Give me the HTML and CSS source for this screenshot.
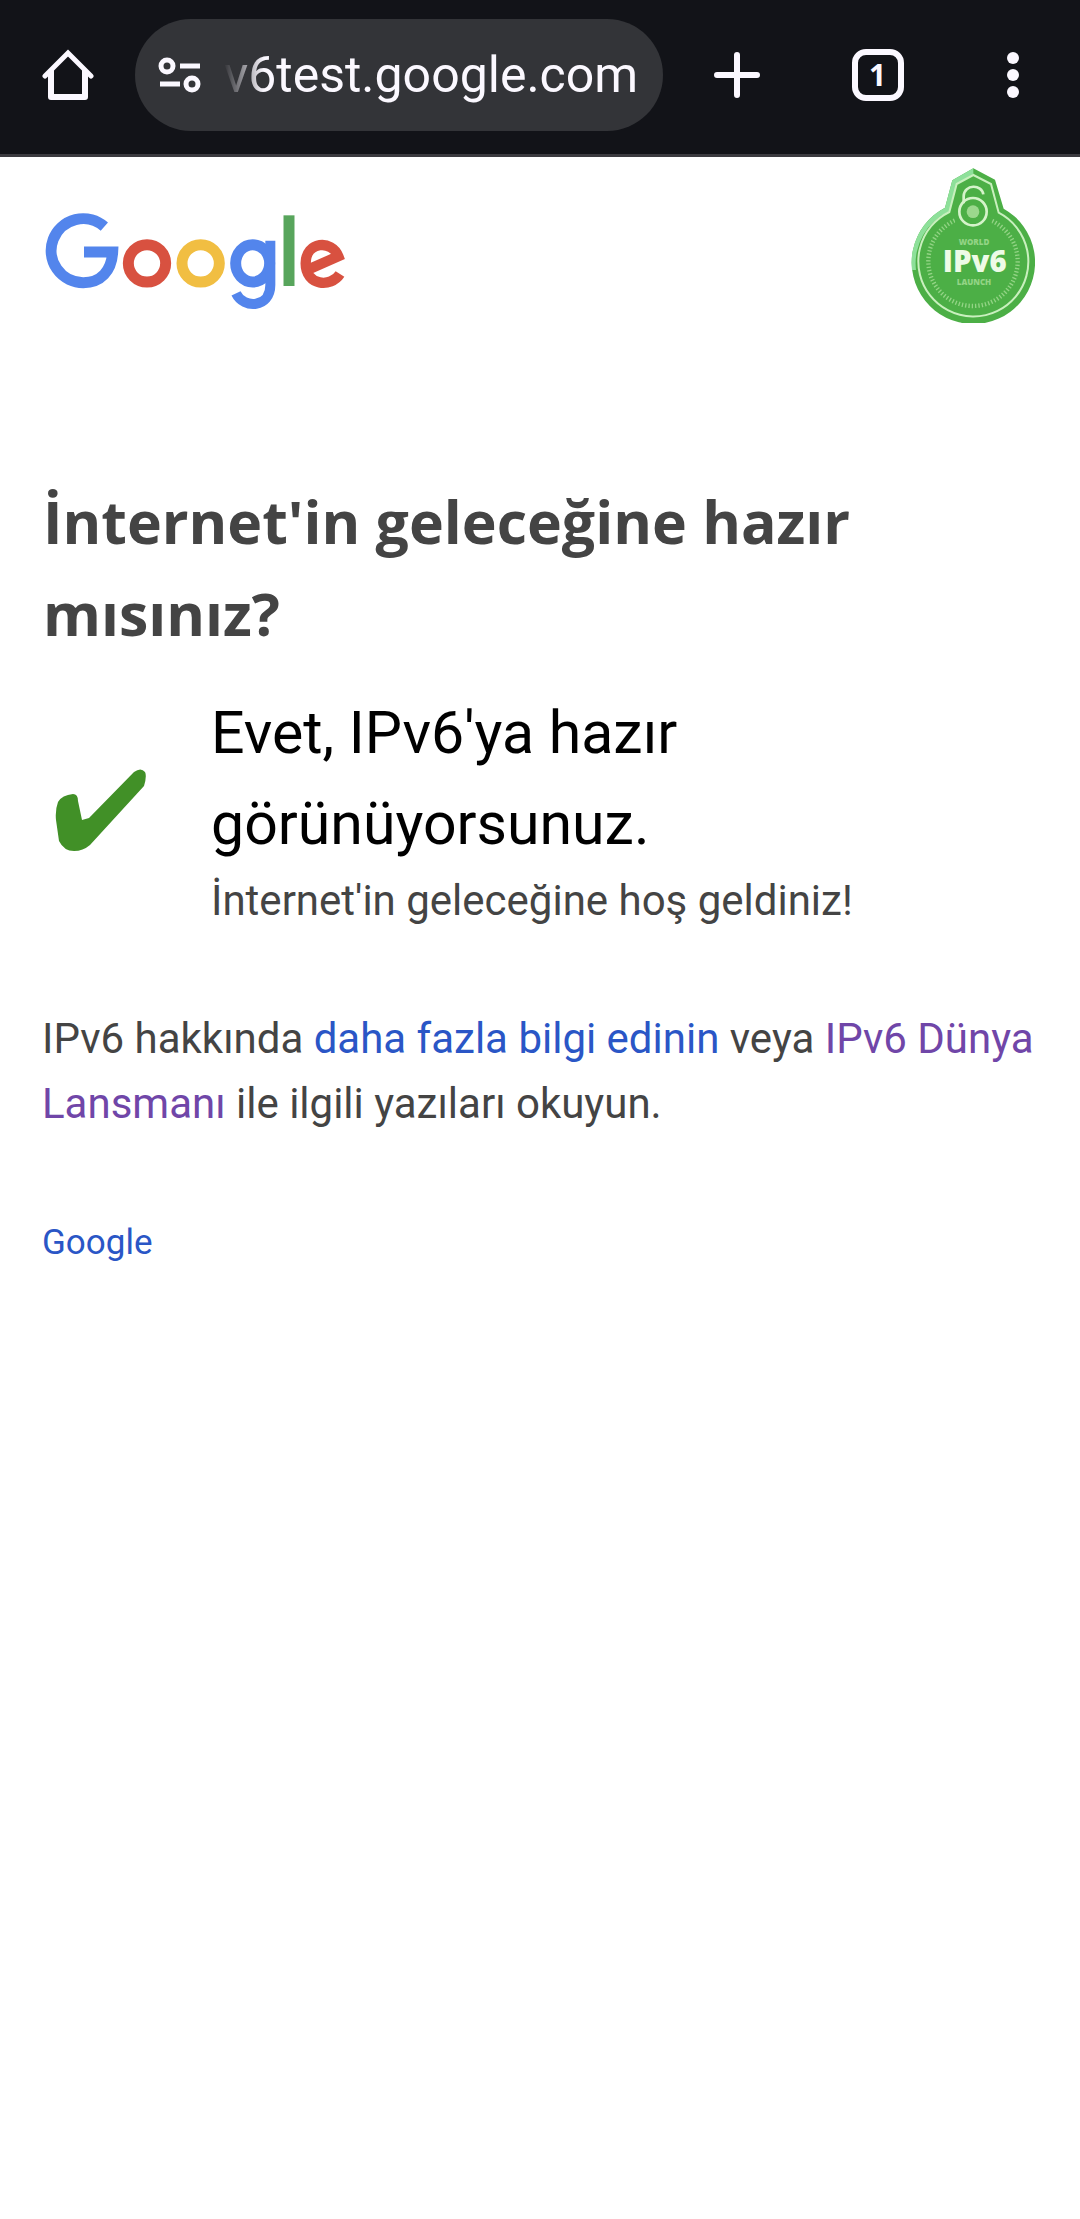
FILE: index.html
```html
<!DOCTYPE html>
<html lang="tr">
<head>
<meta charset="utf-8">
<meta name="viewport" content="width=device-width, initial-scale=1">
<title>IPv6 testi</title>
<link rel="stylesheet" href="styles.css">
</head>
<body>
<header class="toolbar">
  <button class="tool" type="button" aria-label="Ana sayfa">
    <svg width="52" height="52" viewBox="0 0 52 52" fill="none" stroke="currentColor" stroke-width="6" stroke-linejoin="round"><path d="M3 27 26 4 49 27" stroke-linejoin="miter" stroke-linecap="round" stroke-width="5"/><path d="M9 21V48H43V21"/></svg>
  </button>
  <form class="omnibox">
    <svg class="site-icon" width="44" height="38" viewBox="0 0 44 38" fill="none" stroke="currentColor" stroke-width="5"><circle cx="9" cy="10" r="6"/><path d="M22 10H42M2 28H22"/><circle cx="34" cy="28" r="6"/></svg>
    <input class="url" type="text" value="v6test.google.com" aria-label="Adres">
  </form>
  <button class="tool tool-new" type="button" aria-label="Yeni sekme">
    <svg width="46" height="46" viewBox="0 0 46 46" fill="none" stroke="currentColor" stroke-width="6" stroke-linecap="round"><path d="M3 23H43M23 3V43"/></svg>
  </button>
  <button class="tool" type="button" aria-label="Sekmeler"><span class="tabs">1</span></button>
  <button class="tool" type="button" aria-label="Menü">
    <svg width="12" height="46" viewBox="0 0 12 46" fill="currentColor"><circle cx="6" cy="6" r="6"/><circle cx="6" cy="23" r="6"/><circle cx="6" cy="40" r="6"/></svg>
  </button>
</header>
<main class="page">
  <div class="brand">
    <svg class="logo" width="300" height="98" viewBox="45 36 900 294" fill="none" stroke-width="33" role="img" aria-label="Google">
      <path stroke="#5385ec" d="M223 80A96 96 0 1 0 160 248C212 248 245 213 248 156H162"/>
      <circle stroke="#d85140" cx="351" cy="190" r="56"/>
      <circle stroke="#f1be42" cx="512" cy="190" r="56"/>
      <g stroke="#5385ec"><ellipse cx="668" cy="190" rx="51" ry="56"/><path stroke-width="30" d="M721 122V255C721 324 641 328 618 280"/></g>
      <path stroke="#58a55c" d="M777 46V258"/>
      <path stroke="#d85140" stroke-width="31" d="M840 206 925 169C906 118 827 124 827 190C827 258 903 264 930 222"/>
    </svg>
    <svg class="badge" width="124" height="155" viewBox="63 24 372 465" role="img" aria-label="World IPv6 Launch">
      <path fill="#4caf46" d="M250 25 315 59 341 146A185 185 0 1 1 165 143L187 61Z"/>
      <path fill="#8ee09a" d="M250 25 187 61 165 143A185 185 0 0 0 66 330L78 330A171 171 0 0 1 178 154L200 72 250 42Z"/>
      <path fill="none" stroke="#c9f0be" stroke-width="6" d="M250 45 303 72 326 158A165 165 0 1 1 178 156L200 72Z"/>
      <circle cx="249" cy="304" r="134" fill="none" stroke="#93d485" stroke-width="13" stroke-dasharray="4 6"/>
      <path fill="#4caf46" d="M205 120H295L305 190H195Z"/>
      <path fill="none" stroke="#d5f3ca" stroke-width="8" d="M221 130V108C223 72 276 72 280 103"/>
      <circle cx="249" cy="155" r="41" fill="none" stroke="#d5f3ca" stroke-width="8"/>
      <circle cx="249" cy="155" r="19" fill="#9bd88d"/>
      <g text-anchor="middle" class="badge-text"><text x="254" y="336" class="badge-big">IPv6</text><text x="252" y="254" class="badge-small">WORLD</text><text x="252" y="375" class="badge-small">LAUNCH</text></g>
    </svg>
  </div>
  <h1 class="title">İnternet'in geleceğine hazır mısınız?</h1>
  <section class="result">
    <svg class="check" width="92" height="84" viewBox="0 0 92 84"><path fill="#419027" d="M3 34Q7 27 18 26Q23 26 23 33L27 52L34 50L79 4Q86-1 90 4Q92 8 89 18L35 77Q28 83 19 83Q9 83 4 73L1 52Q0 42 3 34Z"/></svg>
    <div>
      <p class="answer">Evet, IPv6'ya hazır görünüyorsunuz.</p>
      <p class="welcome">İnternet'in geleceğine hoş geldiniz!</p>
    </div>
  </section>
  <p class="more">IPv6 hakkında <a href="#bilgi">daha fazla bilgi edinin</a> veya <a class="visited" href="#lansman">IPv6 Dünya Lansmanı</a> ile ilgili yazıları okuyun.</p>
  <footer class="footer"><a href="#google">Google</a></footer>
</main>
</body>
</html>
```
FILE: styles.css
```css
* { box-sizing: border-box; }
body { margin: 0; background: #fff; color: #444; font-family: Roboto, sans-serif; font-size: 42px; }
h1, p { margin: 0; }
a { color: #2a56c6; text-decoration: none; }
svg { display: block; flex: none; }

.toolbar { display: flex; align-items: center; padding: 19px 0 23px; background: #121318; border-bottom: 3px solid #3b3a3f; color: #fbf8ff; }
.tool { display: flex; flex: none; align-items: center; justify-content: center; width: 135px; height: 112px; padding: 0; border: 0; background: none; color: inherit; }
.tool-new { width: 147px; }
.omnibox { display: flex; flex: 1; align-items: center; gap: 22px; min-width: 0; height: 112px; padding: 0 20px 0 23px; border-radius: 56px; background: #333438; }
.url { flex: 1; min-width: 0; height: 70px; padding: 0; border: 0; outline: 0; background: none; color: inherit; font: 50px/70px Roboto, sans-serif; -webkit-mask-image: linear-gradient(to right, transparent, #000 40px); mask-image: linear-gradient(to right, transparent, #000 40px); }
.tabs { width: 52px; height: 52px; border: 6px solid; border-radius: 14px; font: bold 30px/40px "Open Sans", sans-serif; text-align: center; }

.page { padding: 11px 42px 0; }
.brand { display: flex; justify-content: space-between; }
.logo { margin: 44px 0 0 3px; }
.badge { margin-right: 3px; }
.badge-text { fill: #edfbe6; font-family: "Open Sans", sans-serif; font-weight: 800; }
.badge-big { font-size: 88px; }
.badge-small { font-size: 24px; fill: #93d485; }

.title { margin-top: 152px; padding-left: 1px; font: bold 59px/92px "Open Sans", sans-serif; }
.result { display: flex; align-items: center; gap: 64px; margin-top: 28px; padding-left: 13px; }
.answer { color: #000; font-size: 59px; line-height: 91px; }
.welcome { line-height: 64px; }
.more { margin-top: 73px; line-height: 65px; }
.visited { color: #7046a8; }
.footer { margin-top: 79px; font-size: 35px; line-height: 56px; }
```
